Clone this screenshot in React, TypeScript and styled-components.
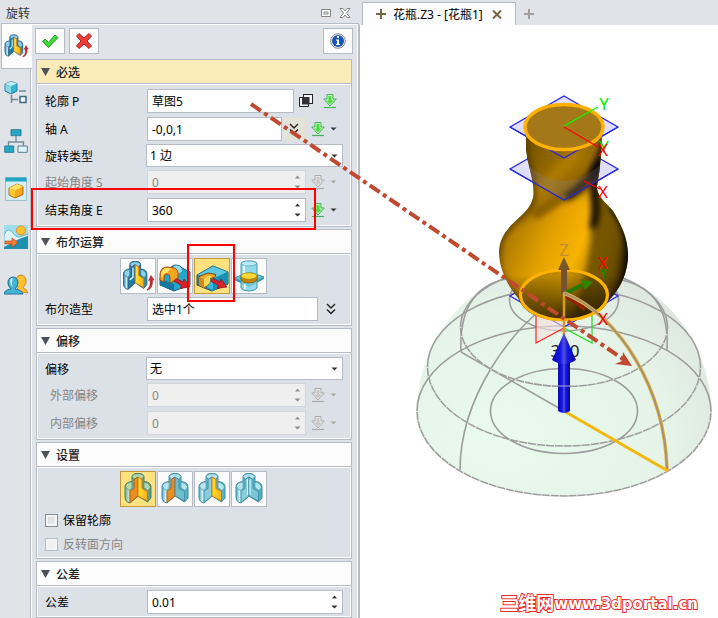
import React, { useId, useState } from "react";
import styled, { createGlobalStyle, css } from "styled-components";

const line = "#b6bcc6";
const chrome = "#e0e4e8";
const panel = "#dce0e7";

const GlobalStyle = createGlobalStyle`
  * { box-sizing: border-box; }
  body { margin: 0; background: #fff; }
  body, button, input, select {
    font-family: "Noto Sans", "Noto Sans CJK SC", sans-serif;
    font-size: 12px;
    color: #000;
  }
  button { padding: 0; margin: 0; cursor: pointer; }
  svg { display: block; flex: none; }
`;

/* ---------- page ---------- */

const Page = styled.div`
  position: relative;
  display: flex;
  min-height: 100vh;
  overflow: hidden;
  background: ${chrome};
`;

const Dock = styled.aside`
  flex: none;
  width: 359px;
  display: flex;
  flex-direction: column;
`;

const TitleBar = styled.header`
  display: flex;
  align-items: center;
  height: 23px;
  padding: 2px 8px 0 6px;
  gap: 8px;
  color: #333;
`;

const Title = styled.h1`
  flex: 1;
  margin: 0;
  font-size: 12px;
  font-weight: 400;
`;

const PlainButton = styled.button`
  display: flex;
  align-items: center;
  justify-content: center;
  border: 0;
  background: none;
`;

const DockBody = styled.div`
  flex: 1;
  display: flex;
`;

const SideTabs = styled.nav`
  flex: none;
  width: 32px;
  padding-left: 1px;
  display: flex;
  flex-direction: column;
  background: linear-gradient(to right, transparent 30px, ${line} 30px, ${line} 31px, #fff 31px);
`;

const SideTab = styled.button<{ $active?: boolean }>`
  display: flex;
  align-items: center;
  justify-content: center;
  height: ${(p) => (p.$active ? 46 : 48)}px;
  padding-right: 2px;
  border: 1px solid ${(p) => (p.$active ? line : "transparent")};
  border-right: 0;
  background: ${(p) => (p.$active ? "#fcfcfd" : "none")};
`;

const PropertyPanel = styled.form`
  flex: 1;
  min-width: 0;
  display: flex;
  flex-direction: column;
  padding: 4px 5px 0 3px;
  border-top: 1px solid ${line};
  border-right: 1px solid ${line};
  box-shadow: inset -1px 1px 0 #fff;
`;

const Toolbar = styled.div`
  display: flex;
  gap: 4px;
  height: 31px;
`;

const Spacer = styled.span`
  flex: 1;
`;

const ToolButton = styled.button`
  display: flex;
  align-items: center;
  justify-content: center;
  width: 30px;
  height: 26px;
  border: 1px solid ${line};
  background: #fcfcfd;
`;

/* ---------- sections ---------- */

const Panels = styled.div`
  display: flex;
  flex-direction: column;
  gap: 2px;
`;

const Section = styled.section`
  margin: 0 1px;
  border: 1px solid ${line};
  background: ${panel};
`;

const SectionHead = styled.button<{ $accent?: boolean }>`
  display: flex;
  align-items: center;
  gap: 6px;
  width: 100%;
  height: 24px;
  padding: 0 4px;
  border: 0;
  border-bottom: 1px solid ${line};
  background: ${(p) => (p.$accent ? "#faebb8" : "#fcfcfd")};
  color: #222;
  font-weight: 500;
`;

const SectionBody = styled.div`
  display: flex;
  flex-direction: column;
  gap: 4px;
  padding: 4px 7px 3px 7px;
  border: 1px solid #fff;
`;

const Row = styled.div<{ $h?: number; $indent?: boolean }>`
  display: flex;
  align-items: center;
  height: ${(p) => p.$h ?? 24}px;
  padding-left: ${(p) => (p.$indent ? 5 : 0)}px;
`;

const Label = styled.label<{ $muted?: boolean; $indent?: boolean }>`
  flex: none;
  width: ${(p) => (p.$indent ? 97 : 102)}px;
  color: ${(p) => (p.$muted ? "#858585" : "#000")};
`;

const boxed = css`
  border: 1px solid ${line};
  background: #fff;
  outline: none;
`;

const TextBox = styled.input`
  ${boxed}
  flex: 1;
  min-width: 0;
  height: 24px;
  padding: 0 4px;
`;

const SelectWrap = styled.div`
  ${boxed}
  flex: 1;
  display: grid;
  align-items: center;
  height: 23px;
  margin-left: -1px;
  & > * { grid-area: 1 / 1; }
  & > svg { justify-self: end; margin-right: 4px; pointer-events: none; }
`;

const Select = styled.select`
  appearance: none;
  width: 100%;
  height: 100%;
  padding: 0 16px 0 3px;
  border: 0;
  background: none;
  outline: none;
`;

const SpinWrap = styled.div<{ $off?: boolean }>`
  ${boxed}
  flex: 1;
  min-width: 0;
  display: flex;
  height: 24px;
  ${(p) => p.$off && css`border-color: #d2d5db; background: #efefef;`}
`;

const SpinInput = styled.input`
  appearance: textfield;
  flex: 1;
  min-width: 0;
  padding: 0 4px;
  border: 0;
  background: none;
  outline: none;
  &::-webkit-inner-spin-button { appearance: none; margin: 0; }
  &:disabled { color: #858585; }
`;

const SpinButtons = styled.div`
  display: grid;
  grid-template-rows: 1fr 1fr;
  width: 16px;
  padding: 1px 0;
`;

const Extras = styled.div<{ $wide?: boolean }>`
  flex: none;
  display: flex;
  align-items: center;
  width: ${(p) => (p.$wide ? 49 : 37)}px;
  padding-left: 5px;
  gap: ${(p) => (p.$wide ? 10 : 5)}px;
`;

const Chevrons = styled.button`
  flex: none;
  display: flex;
  align-items: center;
  justify-content: center;
  width: 22px;
  height: 22px;
  margin: 0 1px;
  border: 1px solid #e9e2cb;
  background: #e3e3da;
`;

const MoreButton = styled(PlainButton)`
  flex: none;
  width: 25px;
  height: 22px;
`;

const IconRow = styled.div`
  display: flex;
  align-items: center;
  gap: 1px;
  height: 34px;
  padding-left: 75px;
`;

const IconToggle = styled.button<{ $on?: boolean }>`
  display: flex;
  flex: none;
  width: 36px;
  height: 36px;
  border: 1px solid ${(p) => (p.$on ? "#c3983f" : line)};
  background: ${(p) => (p.$on ? "#ffe27d" : "#fcfcfd")};
`;

const CheckLabel = styled.label<{ $muted?: boolean }>`
  display: flex;
  align-items: center;
  gap: 5px;
  height: 20px;
  color: ${(p) => (p.$muted ? "#858585" : "#000")};
`;

const CheckBox = styled.input`
  appearance: none;
  width: 13px;
  height: 13px;
  margin: 0;
  border: 1px solid #8b8d90;
  background: linear-gradient(135deg, #d0d3d8, #f6f6f6);
  box-shadow: inset 0 0 0 2px #f4f4f4;
  &:checked { background: #4a6da0; }
  &:disabled { border-color: #b9bcc0; background: #f0f0f0; }
`;

/* ---------- workspace ---------- */

const Workspace = styled.main`
  flex: 1;
  min-width: 0;
  display: flex;
  flex-direction: column;
`;

const DocTabs = styled.div`
  display: flex;
  align-items: flex-end;
  height: 25px;
  padding-left: 3px;
`;

const DocTab = styled.div`
  display: flex;
  align-items: center;
  height: 23px;
  width: 154px;
  padding: 0 13px 0 13px;
  gap: 7px;
  border: 1px solid ${line};
  border-bottom: 0;
  background: #fcfcfd;
  white-space: nowrap;
`;

const DocName = styled.span`
  flex: 1;
`;

const NewTab = styled(PlainButton)`
  width: 26px;
  height: 22px;
`;

const Viewport = styled.div`
  position: relative;
  flex: 1;
  border-left: 1px solid ${line};
  background: #fff;
`;

const Scene = styled.svg`
  width: 100%;
  height: auto;
`;

const Watermark = styled.div`
  position: absolute;
  right: 20px;
  bottom: 3px;
  display: flex;
  align-items: center;
  font: bold 15px/22px "DejaVu Sans", "Noto Sans CJK SC", sans-serif;
  color: #fff;
  -webkit-text-stroke: 2px #ea2a2a;
  paint-order: stroke fill;
`;

const WatermarkName = styled.span`
  font-size: 18px;
`;

const Annotations = styled.svg`
  position: absolute;
  left: 0;
  top: 0;
  pointer-events: none;
`;

/* ---------- small icons ---------- */

const Caret = ({ up, color = "#333" }: { up?: boolean; color?: string }) => (
  <svg width="7" height="4" viewBox="0 0 7 4" aria-hidden>
    <path d={up ? "M1 3.5 3.5.5 6 3.5Z" : "M.5.5h6L3.5 3.6Z"} fill={color} />
  </svg>
);

const DownArrow = ({ off }: { off?: boolean }) => {
  const stroke = off ? "#a9aaac" : "#43b35a";
  return (
    <svg width="14" height="15" viewBox="0 0 14 15" aria-hidden>
      <path d="M4 .5h6v4.500h3.300L7 12 .8 5H4Z" fill={off ? "#e8e8e8" : "#c9f5c0"} stroke={stroke} />
      <path d="M5.500 2h3v4.500h2L7 10.300 3.500 6.500h2Z" fill={off ? "#c8c8c8" : "#45e03c"} />
      <path d="M1 13.500h12" stroke={stroke} strokeWidth="1.200" />
    </svg>
  );
};

const DoubleChevron = () => (
  <svg width="12" height="12" viewBox="0 0 12 12" fill="none" stroke="#222" strokeWidth="1.4" aria-hidden>
    <path d="m2 1 4 4 4-4M2 6.5l4 4 4-4" />
  </svg>
);

const Overlap = () => (
  <svg width="14" height="14" viewBox="0 0 14 14" aria-hidden>
    <path d="M4.500.500h9v9h-9zM.500 3.500h9v9h-9z" fill="#f2f2fa" stroke="#222" />
    <path d="M4.500.500h9v9h-9z" fill="none" stroke="#222" />
    <path d="M3 3h7.500v7.500H3z" fill="#333" />
  </svg>
);

const Cross = ({ color, size = 10 }: { color: string; size?: number }) => (
  <svg width={size} height={size} viewBox="0 0 10 10" stroke={color} strokeWidth="2" aria-hidden>
    <path d="M5 0v10M0 5h10" />
  </svg>
);

const Flange = ({ left, right, green, arrow, size = 34, strong }: {
  left?: boolean; right?: boolean; green?: boolean; arrow?: boolean; size?: number; strong?: boolean;
}) => {
  const id = useId().replace(/[^a-zA-Z0-9]/g, "");
  const edge = green ? "#4c7f68" : strong ? "#2a5f80" : "#3f8ba3";
  const light = green ? "#b4d8ad" : strong ? "#8fd0ea" : "#b5e5ef";
  return (
    <svg width={size} height={size} viewBox="1 1 34 34" aria-hidden>
      <defs>
        <linearGradient id={`b${id}`} x1="0" x2="1">
          <stop offset="0" stopColor={green ? "#6fae92" : strong ? "#2480ad" : "#4fa8bd"} />
          <stop offset=".14" stopColor={green ? "#c2dfc0" : "#d4f4fa"} />
          <stop offset=".3" stopColor={green ? "#6aab93" : strong ? "#2480ad" : "#62b9cc"} />
          <stop offset="1" stopColor={green ? "#579e8a" : strong ? "#1992bd" : "#4fb4c8"} />
        </linearGradient>
        <linearGradient id={`y${id}`} x1="0" x2="1">
          <stop offset="0" stopColor="#ffe52f" />
          <stop offset="1" stopColor="#f8ae17" />
        </linearGradient>
      </defs>
      <g transform={arrow ? "translate(-1 1) scale(.9 .95)" : undefined}>
        <path d="M5 15Q6 11 12 10.500V6Q12 2.500 18 2.500T24 6V10.500Q31 11 31 16V27L27.500 31 18 25 10 32Q5 31 5 26Z" fill={`url(#b${id})`} stroke={edge} />
        <path d="M5.500 15Q6.500 11.500 12 11V16.500L10 19.500Q6 18.500 5.500 15ZM30.500 16Q29 11.500 24 11V16.500L27.500 19.500Q30 19 30.500 16Z" fill={light} stroke={edge} strokeWidth=".6" />
        <path d="M12.200 5.500Q13 2.800 18 2.800T23.800 5.500L22 8.500 18 6 14 8.500Z" fill={light} stroke={edge} strokeWidth=".7" />
        <path d="M18 6 14 8.500V17.500L10 20V31.500L18 25Z" fill={left ? "#e98e21" : strong ? "#1f7ba5" : "#8bccd9"} stroke={left ? "#b85a15" : edge} strokeWidth=".9" />
        {strong && <path d="M15.500 9v10l-3.500 3" fill="none" stroke="#d9f6fc" strokeWidth="1.500" />}
        <path d="M18 6 22 8.500V17.500L27.500 20.500V30L18 25Z" fill={right ? `url(#y${id})` : left ? "#6fbdcd" : "#79c7d6"} stroke={right ? "#d77316" : edge} strokeWidth=".9" />
        {!right && !left && <path d="M16.500 8v16M19 8.500v15" stroke="#e7fbff" />}
      </g>
      {arrow && <path d="M27 31.500q4-2 3-9.500l-1.500.500 2.500-5 3 4.500-1.500.300q.5 8.500-5.500 10Z" fill="#d8242b" stroke="#8d1218" strokeWidth=".5" />}
    </svg>
  );
};

const RedArrow = ({ x, y }: { x: number; y: number }) => (
  <path transform={`translate(${x} ${y})`} d="M0 3 2 .500 9 4 10 1 16 9 6 10.500 7.500 7.500Z" fill="#d9232c" stroke="#861117" strokeWidth=".7" />
);

const AddIcon = () => (
  <svg width="34" height="34" viewBox="1 1 34 34" aria-hidden>
    <path d="M13 12q1-5 6-5 4 0 6 3l8 4v13L17 33 3 27v-7Z" fill="#23a7cb" stroke="#195d80" />
    <path d="M15 11q1-4 5-3.500 5 .500 5 6l-6 4Z" fill="#8cdcee" />
    <path d="M3 21v6l14 6V26Z" fill="#1578a0" />
    <path d="M3 22V16Q4 9 10 9l6 .500q6 1.500 5 8.500v3l-8 4v-5q0-4-3-4t-3 4v4Z" fill="#f4a51e" stroke="#a54a10" />
    <path d="M4 17Q5 10 10 10l5 .800Q11 12 10.500 15 6 14 5.500 20Z" fill="#ffe668" />
    <RedArrow x={17} y={20} />
  </svg>
);

const RemoveIcon = () => (
  <svg width="34" height="34" viewBox="1 1 34 34" aria-hidden>
    <path d="M3 17 19 8l15 6v12L18 33 3 27Z" fill="#2196ba" stroke="#17506e" />
    <path d="m3 17 16-9 15 6-15 7Z" fill="#5fc8e2" stroke="#237a9b" strokeWidth=".6" />
    <path d="m19 21 15-7v12l-16 7Z" fill="#1590b6" />
    <path d="M5 18.500 14 15l8 1.500-1.500 3L16 20.500q1 4-2 6.500l-4 3-5-3Z" fill="#f0a826" stroke="#7b4a14" />
    <path d="m5 19 5 2v9l-5-3Z" fill="#d98a1a" />
    <path d="m10 21 3-2.500 6-1-3 3q1 3-2 6.500l-4 2Z" fill="#ffd95a" />
    <path d="m13 29 4-5 2 1v7Z" fill="#36bada" />
    <RedArrow x={17} y={20} />
  </svg>
);

const IntersectIcon = () => (
  <svg width="34" height="34" viewBox="1 1 34 34" aria-hidden>
    <path d="m3 20 16-6 14 5-15 8Z" fill="#67c4d5" stroke="#3e97ae" />
    <path d="m3 20 15 7 15-8v2l-15 8-15-7Z" fill="#3598b0" />
    <path d="M10 6q0-3 8-3t8 3v24q-2 3-8 3t-8-3Z" fill="#79cfe4" fillOpacity=".8" stroke="#4299b3" />
    <path d="M13 7v9M14 26v5" stroke="#e2fbff" strokeWidth="2" />
    <ellipse cx="18" cy="5.500" rx="7.500" ry="2.500" fill="#b7ebf5" stroke="#4299b3" strokeWidth=".6" />
    <path d="M10 18v4q2 3 8 3t8-3v-4Z" fill="#c68408" stroke="#6d5410" strokeWidth=".7" />
    <ellipse cx="18" cy="18" rx="8" ry="3.200" fill="#ffd831" stroke="#9a7b18" strokeWidth=".7" />
  </svg>
);

const FeatureTreeIcon = () => (
  <svg width="24" height="24" viewBox="0 0 24 24" fill="none" aria-hidden>
    <path d="m1 3 6-2.500 6 2v7.500L7 13 1 10Z" fill="#35b5d5" stroke="#277a9a" />
    <path d="m1 3 6-2.500 6 2-6 2.500Z" fill="#c3f0f8" />
    <path d="M1.500 3.500 7 5.500v7l-5.500-3Z" fill="#89d9ea" />
    <path d="M15 10h7M7.500 14v8M7.500 18.500H14" stroke="#718a98" strokeWidth="1.500" />
    <path d="M16 15.500h6v6h-6Z" fill="#eef6f9" stroke="#3f6a80" strokeWidth="1.500" />
  </svg>
);

const AssemblyIcon = () => (
  <svg width="24" height="24" viewBox="0 0 24 24" fill="none" aria-hidden>
    <path d="M12 7v6M4.500 17v-4h15v4" stroke="#718a98" strokeWidth="1.300" />
    <path d="M7 .7h10v6H7Z" fill="#25a8c6" stroke="#307f98" />
    <path d="M.7 17h9v6.300h-9Z" fill="#25a8c6" stroke="#307f98" />
    <path d="M14 17h9.300v6.300H14Z" fill="#dff4f9" stroke="#5b7f90" />
  </svg>
);

const VisualIcon = () => (
  <svg width="24" height="24" viewBox="0 0 24 24" aria-hidden>
    <path d="M1.500.5h21v23h-21Z" fill="#d5eff7" stroke="#9dbfcc" />
    <path d="M1.500.5h21v4h-21Z" fill="#23a5c5" />
    <path d="m5 11 8-4 6 2.500v8L11 21l-6-3Z" fill="#f4a81e" stroke="#b56816" />
    <path d="m5 11 8-4 6 2.500-8 4Z" fill="#ffe465" />
    <path d="m5.500 11.500 5.500 2v7l-5.500-3Z" fill="#ffc832" />
  </svg>
);

const ViewIcon = () => (
  <svg width="24" height="24" viewBox="0 0 24 24" aria-hidden>
    <path d="M0 0h24v24H0Z" fill="#9dddec" />
    <path d="M0 10Q4 1 9 8q4 6 9 3l6-2v15H0Z" fill="#d9f3f8" stroke="#4ea3bb" strokeWidth=".7" />
    <path d="M0 22q6-3 11-6t13-5v13H0Z" fill="#208eae" />
    <circle cx="17" cy="5.500" r="4.500" fill="#ffc632" stroke="#f08b22" />
    <path d="M1 16h7v-3l6 4.500L8 22v-3H1Z" fill="#f37e35" stroke="#c14819" strokeWidth=".7" />
  </svg>
);

const RoleIcon = () => (
  <svg width="24" height="24" viewBox="0 0 24 24" aria-hidden>
    <path d="M11 18q5-2 1-9 0-7 5-7 6 1 5 8-2 3-3 5 4 1 5 5Z" fill="#ffbf2f" stroke="#c27a17" strokeWidth=".8" />
    <path d="M0 21q0-4 7-5-4-4-3-8 1-4 5-4t5 5q0 4-3 7 7 1 8 5Z" fill="#43b5d4" stroke="#216f96" />
    <path d="M6 8q0-3 3-3-2 5 0 9Q6 12 6 8Z" fill="#bcecf6" />
  </svg>
);

/* ---------- composed fields ---------- */

const Spinner = ({ id, value, off }: { id: string; value: number; off?: boolean }) => {
  const [current, setCurrent] = useState(String(value));
  const step = value && value < 1 ? 0.01 : 1;
  const nudge = (by: number) => setCurrent((c) => String(Number((Number(c) + by).toFixed(2))));
  const color = off ? "#909090" : "#333";
  return (
    <SpinWrap $off={off}>
      <SpinInput id={id} type="number" step={step} disabled={off} value={current} onChange={(e) => setCurrent(e.target.value)} />
      <SpinButtons>
        <PlainButton type="button" aria-label="增加" disabled={off} onClick={() => nudge(step)}><Caret up color={color} /></PlainButton>
        <PlainButton type="button" aria-label="减少" disabled={off} onClick={() => nudge(-step)}><Caret color={color} /></PlainButton>
      </SpinButtons>
    </SpinWrap>
  );
};

const Picker = ({ off }: { off?: boolean }) => (
  <Extras>
    <PlainButton type="button" aria-label="输入选项" disabled={off}><DownArrow off={off} /></PlainButton>
    <PlainButton type="button" aria-label="更多" disabled={off}><Caret color={off ? "#aaa" : "#333"} /></PlainButton>
  </Extras>
);

const SpinRow = ({ label, value, off, indent }: { label: string; value: number; off?: boolean; indent?: boolean }) => {
  const id = useId();
  return (
    <Row $indent={indent}>
      <Label htmlFor={id} $muted={off} $indent={indent}>{label}</Label>
      <Spinner id={id} value={value} off={off} />
      <Picker off={off} />
    </Row>
  );
};

const SelectRow = ({ label, options }: { label: string; options: string[] }) => {
  const id = useId();
  return (
    <Row $h={21}>
      <Label htmlFor={id}>{label}</Label>
      <SelectWrap>
        <Select id={id}>{options.map((o) => <option key={o}>{o}</option>)}</Select>
        <Caret />
      </SelectWrap>
    </Row>
  );
};

const Group = ({ title, accent, children }: { title: string; accent?: boolean; children: React.ReactNode }) => {
  const [open, setOpen] = useState(true);
  return (
    <Section>
      <SectionHead type="button" $accent={accent} aria-expanded={open} onClick={() => setOpen(!open)}>
        <svg width="9" height="8" viewBox="0 0 9 8" aria-hidden><path d="M0 0h9L4.500 8Z" fill="#4d5259" /></svg>
        {title}
      </SectionHead>
      {open && <SectionBody>{children}</SectionBody>}
    </Section>
  );
};

/* ---------- model view ---------- */

const vase = "M526 127V150Q527 160 530 170Q535 190 533 198C531 206 526 211 522 215C508 227 499 237 499 252C499 270 508 286 518 298Q526 320 564 321Q601 318 608 301C618 292 628 275 628 255C628 237 620 223 613 211C604 200 597 197 597 186Q602 160 602 127Z";

const Model = () => (
  <Scene viewBox="360 25 358 592" aria-label="花瓶1" role="img">
    <defs>
      <radialGradient id="dome" cx=".3" cy=".75" r=".85">
        <stop offset="0" stopColor="#eafaed" />
        <stop offset=".65" stopColor="#e5f3e8" />
        <stop offset="1" stopColor="#dce5de" />
      </radialGradient>
      <linearGradient id="body" gradientUnits="userSpaceOnUse" x1="499" y1="225" x2="594" y2="265">
        <stop offset="0" stopColor="#6e4e00" />
        <stop offset=".15" stopColor="#b17e00" />
        <stop offset=".5" stopColor="#e3a100" />
        <stop offset=".8" stopColor="#f8b300" />
        <stop offset="1" stopColor="#c88f00" />
      </linearGradient>
      <linearGradient id="lobe" gradientUnits="userSpaceOnUse" x1="580" y1="240" x2="628" y2="250">
        <stop offset="0" stopColor="#5b4200" />
        <stop offset=".4" stopColor="#7a5900" />
        <stop offset=".8" stopColor="#6b4e00" />
        <stop offset="1" stopColor="#251900" />
      </linearGradient>
      <linearGradient id="foot" x1="0" y1="0" x2="0" y2="1">
        <stop offset="0" stopColor="#000" stopOpacity="0" />
        <stop offset="1" stopColor="#000" stopOpacity=".85" />
      </linearGradient>
      <linearGradient id="shaft" x1="0" x2="1">
        <stop offset="0" stopColor="#0909a8" />
        <stop offset=".35" stopColor="#1616f0" />
        <stop offset=".5" stopColor="#5353d6" />
        <stop offset=".65" stopColor="#1414e8" />
        <stop offset="1" stopColor="#05058a" />
      </linearGradient>
      <filter id="soft" filterUnits="userSpaceOnUse" x="470" y="90" width="190" height="260"><feGaussianBlur stdDeviation="6" /></filter>
      <filter id="softer" filterUnits="userSpaceOnUse" x="470" y="90" width="190" height="260"><feGaussianBlur stdDeviation="3" /></filter>
      <clipPath id="vaseClip"><path d={vase} /></clipPath>
    </defs>

    <path d="M417 411A147 147 0 0 1 711 411 147 85 0 0 1 417 411Z" fill="url(#dome)" />

    <g fill="none" stroke="#9d9d9d" strokeWidth="1.600">
      <ellipse cx="564" cy="411" rx="147" ry="85" />
      <ellipse cx="564" cy="367" rx="136.500" ry="79" />
      <ellipse cx="564" cy="327" rx="103.500" ry="59.500" />
      <ellipse cx="564" cy="300" rx="54.500" ry="31" />
      <ellipse cx="564" cy="411" rx="73.500" ry="42.500" />
      <path d="M460 470C460 400 510 325 564 293M461 352C459 310 475 278 520 278M667 350C669 310 655 282 608 278M461 352 564 411" />
    </g>
    <g fill="none" stroke="#e9f5eb" strokeWidth="1.600" strokeDasharray="1 8">
      <path d="M417 411a147 85 0 0 0 294 0M427.500 367a136.500 79 0 0 0 273 0M460.500 327a103.500 59.500 0 0 0 207 0" />
    </g>

    <g fill="#dfdffb" stroke="#2222e8" strokeWidth="1.200">
      <path d="M564 96 618 127 564 158 510 127ZM564 138 618 169 564 200 510 169Z" />
      <path d="M564 265 618 296 564 327 510 296Z" fill="none" />
    </g>
    <path d="M536 312V343L564 328V316" fill="#f5dede" fillOpacity=".6" stroke="#f22" strokeWidth="1.200" />
    <path d="M592 312V343L564 328" fill="none" stroke="#1ee01e" strokeWidth="1.200" />

    <g clipPath="url(#vaseClip)">
      <path d={vase} fill="url(#body)" />
      <path d="M500 110H610V185L560 200 525 220 505 215Z" fill="#7d5800" fillOpacity=".75" filter="url(#soft)" />
      <path d="M580 150 555 175 535 200" fill="none" stroke="#c48b00" strokeWidth="12" strokeOpacity=".7" filter="url(#soft)" />
      <path d="M592 165 640 175V310L566 335Q586 285 591 240Z" fill="url(#lobe)" filter="url(#softer)" />
      <path d="M604 140Q598 168 580 184 562 200 535 216" fill="none" stroke="#2a1c00" strokeWidth="5" strokeOpacity=".5" filter="url(#softer)" />
      <path d="M606 135Q604 158 592 176L578 190 566 198" fill="none" stroke="#000" strokeWidth="6" filter="url(#softer)" />
      <path d="M600 160Q592 180 595 198T592 228" fill="none" stroke="#000" strokeWidth="6" filter="url(#softer)" />
      <path d="M525 127V155L531 180 532 200 520 216 498 238V270L517 304" fill="none" stroke="#241800" strokeWidth="4" strokeOpacity=".8" filter="url(#softer)" />
      <path d="M611 205Q632 230 629 265T606 304" fill="none" stroke="#000" strokeWidth="6" filter="url(#softer)" />
      <path d="M495 275H632V325H495Z" fill="url(#foot)" />
      <path d="M520 174 564 200 608 174V157Q564 205 520 157Z" fill="#8080b0" fillOpacity=".22" />
    </g>
    <path d="M510 127 564 158 618 127M510 169 564 200 618 169" fill="none" stroke="#2222e8" strokeWidth="1.200" />

    <ellipse cx="564" cy="127" rx="39" ry="22.500" fill="#a47818" stroke="#ffb000" strokeWidth="3.500" />
    <ellipse cx="564" cy="295" rx="43.500" ry="25" fill="#503a00" fillOpacity=".3" stroke="#ffb400" strokeWidth="3.200" />

    <path d="M564 126 598 107" stroke="#0f0" strokeWidth="1.300" />
    <path d="M564 127 598 147M584 181 600 189" stroke="#f00" strokeWidth="1.300" />

    <path d="M561 268h6v26h-6Z" fill="#765233" />
    <path d="m564 257 6 13h-12Z" fill="#795826" />
    <path d="m565 293 6 4 16 9-3 5-20-14Z" fill="#8c2400" />
    <path d="m564 294 18-9" stroke="#267900" strokeWidth="4" />
    <path d="m581 279 12 3-8 8Z" fill="#318300" />
    <path d="M564 292V335" stroke="#d69b25" strokeWidth="2.500" />
    <path d="M564 293C620 315 665 390 667 470" fill="none" stroke="#edbd43" strokeWidth="3.600" />
    <path d="M564 293C620 315 665 390 667 470" fill="none" stroke="#a59373" strokeWidth="2.200" />
    <path d="M564 411 668 471" stroke="#f2b80d" strokeWidth="3" />

    <g fontFamily="Noto Sans, sans-serif" fontSize="17" textAnchor="middle">
      <text x="604" y="110" fill="#0e0">Y</text>
      <text x="604" y="153" fill="#0d0">Y</text>
      <text x="603" y="156" fill="#f00">X</text>
      <text x="603" y="198" fill="#f00">X</text>
      <text x="604" y="279" fill="#258500">Y</text>
      <text x="603" y="269" fill="#f00">X</text>
      <text x="603" y="325" fill="#f00">X</text>
      <text x="564" y="256" fill="#c48f30">Z</text>
      <text x="565" y="357" fill="#222">360</text>
    </g>

    <path d="M558 360h12v51q-6 4-12 0Z" fill="url(#shaft)" />
    <path d="m564 333 12 27q-12 8-24 0Z" fill="url(#shaft)" />
    <path d="M558 386h12" stroke="#aaaad0" />
  </Scene>
);

const booleans = [
  { name: "创建", icon: <Flange arrow right strong /> },
  { name: "加运算", icon: <AddIcon /> },
  { name: "减运算", icon: <RemoveIcon /> },
  { name: "交运算", icon: <IntersectIcon /> },
];

const caps = [
  { name: "两端封闭", icon: <Flange left right green /> },
  { name: "起始端封闭", icon: <Flange left /> },
  { name: "末端封闭", icon: <Flange right /> },
  { name: "开放", icon: <Flange /> },
];

const sideTabs = [
  { name: "旋转", icon: <Flange arrow right strong size={26} /> },
  { name: "历史", icon: <FeatureTreeIcon /> },
  { name: "装配", icon: <AssemblyIcon /> },
  { name: "视觉", icon: <VisualIcon /> },
  { name: "视图", icon: <ViewIcon /> },
  { name: "角色", icon: <RoleIcon /> },
];

export default function App() {
  const [bool, setBool] = useState(2);
  const [cap, setCap] = useState(0);

  return (
    <>
      <GlobalStyle />
      <Page>
        <Dock>
          <TitleBar>
            <Title>旋转</Title>
            <PlainButton aria-label="浮动">
              <svg width="10" height="8" viewBox="0 0 10 8" fill="none" stroke="#858585" aria-hidden>
                <path d="M.5.500h9v7h-9zM3 3h4v2H3z" fill="#fff" />
              </svg>
            </PlainButton>
            <PlainButton aria-label="关闭">
              <svg width="12" height="10" viewBox="0 0 12 10" aria-hidden>
                <path d="M1 .5h3l2 2.500L8 .5h3L7.500 5 11 9.500H8L6 7 4 9.500H1L4.500 5Z" fill="#fff" stroke="#858585" />
              </svg>
            </PlainButton>
          </TitleBar>
          <DockBody>
            <SideTabs>
              {sideTabs.map((t, i) => (
                <SideTab key={t.name} $active={i === 0} aria-label={t.name}>{t.icon}</SideTab>
              ))}
            </SideTabs>
            <PropertyPanel onSubmit={(e) => e.preventDefault()}>
              <Toolbar>
                <ToolButton type="submit" aria-label="确定">
                  <svg width="18" height="16" viewBox="0 0 18 16" aria-hidden>
                    <path d="M1.500 8.500 4 6l3.500 3.500L14 2l3 2.500L7.500 14.500Z" fill="#3fdc35" stroke="#259a2b" strokeLinejoin="round" />
                  </svg>
                </ToolButton>
                <ToolButton type="button" aria-label="取消">
                  <svg width="18" height="18" viewBox="0 0 18 18" aria-hidden>
                    <path d="M1.500 4 4 1.500l5 4.500 5-4.500L16.500 4 12 9l4.500 5-2.500 2.500L9 12l-5 4.500L1.500 14 6 9Z" fill="#ee3e38" stroke="#b51f20" strokeLinejoin="round" />
                  </svg>
                </ToolButton>
                <Spacer />
                <ToolButton type="button" aria-label="信息">
                  <svg width="16" height="16" viewBox="0 0 16 16" aria-hidden>
                    <circle cx="8" cy="8" r="7.300" fill="#eee" stroke="#888" />
                    <circle cx="8" cy="8" r="6" fill="#1954b8" />
                    <path d="M7 3h2v2H7zM6 6.500h3V11h1v1H6v-1h1V7.500H6z" fill="#fff" />
                  </svg>
                </ToolButton>
              </Toolbar>

              <Panels>
                <Group title="必选" accent>
                  <Row>
                    <Label htmlFor="profile">轮廓 P</Label>
                    <TextBox id="profile" defaultValue="草图5" />
                    <Extras $wide>
                      <PlainButton type="button" aria-label="草图"><Overlap /></PlainButton>
                      <PlainButton type="button" aria-label="输入选项"><DownArrow /></PlainButton>
                    </Extras>
                  </Row>
                  <Row>
                    <Label htmlFor="axis">轴 A</Label>
                    <TextBox id="axis" defaultValue="-0,0,1" />
                    <Chevrons type="button" aria-label="展开"><DoubleChevron /></Chevrons>
                    <Picker />
                  </Row>
                  <SelectRow label="旋转类型" options={["1 边", "2 边", "对称"]} />
                  <SpinRow label="起始角度 S" value={0} off />
                  <SpinRow label="结束角度 E" value={360} />
                </Group>

                <Group title="布尔运算">
                  <IconRow>
                    {booleans.map((b, i) => (
                      <IconToggle key={b.name} type="button" $on={bool === i} aria-pressed={bool === i} aria-label={b.name} onClick={() => setBool(i)}>{b.icon}</IconToggle>
                    ))}
                  </IconRow>
                  <Row>
                    <Label htmlFor="shapes">布尔造型</Label>
                    <TextBox id="shapes" defaultValue="选中1个" />
                    <MoreButton type="button" aria-label="展开"><DoubleChevron /></MoreButton>
                  </Row>
                </Group>

                <Group title="偏移">
                  <SelectRow label="偏移" options={["无", "收缩/扩张", "加厚"]} />
                  <SpinRow label="外部偏移" value={0} off indent />
                  <SpinRow label="内部偏移" value={0} off indent />
                </Group>

                <Group title="设置">
                  <IconRow>
                    {caps.map((c, i) => (
                      <IconToggle key={c.name} type="button" $on={cap === i} aria-pressed={cap === i} aria-label={c.name} onClick={() => setCap(i)}>{c.icon}</IconToggle>
                    ))}
                  </IconRow>
                  <CheckLabel><CheckBox type="checkbox" />保留轮廓</CheckLabel>
                  <CheckLabel $muted><CheckBox type="checkbox" disabled />反转面方向</CheckLabel>
                </Group>

                <Group title="公差">
                  <Row $h={22}>
                    <Label htmlFor="tolerance">公差</Label>
                    <Spinner id="tolerance" value={0.01} />
                  </Row>
                </Group>
              </Panels>
            </PropertyPanel>
          </DockBody>
        </Dock>

        <Workspace>
          <DocTabs>
            <DocTab>
              <Cross color="#7b6440" />
              <DocName>花瓶.Z3 - [花瓶1]</DocName>
              <PlainButton aria-label="关闭标签">
                <svg width="10" height="9" viewBox="0 0 10 9" stroke="#7b6440" strokeWidth="2" aria-hidden><path d="m1 .5 8 8m0-8-8 8" /></svg>
              </PlainButton>
            </DocTab>
            <NewTab aria-label="新建标签"><Cross color="#a39d9c" /></NewTab>
          </DocTabs>
          <Viewport>
            <Model />
            <Watermark><WatermarkName>三维网</WatermarkName>www.3dportal.cn</Watermark>
          </Viewport>
        </Workspace>

        <Annotations width="718" height="618" viewBox="0 0 718 618" fill="none" aria-hidden>
          <path d="M32 189h283v40H32ZM188 245h46v56h-46Z" stroke="#f00" strokeWidth="2" />
          <path d="M251 104 623 359" stroke="#c0492f" strokeWidth="4" strokeDasharray="12 4 4 4" />
          <path d="m632 366-17-2 7-3 1-9Z" fill="#c0492f" />
        </Annotations>
      </Page>
    </>
  );
}
